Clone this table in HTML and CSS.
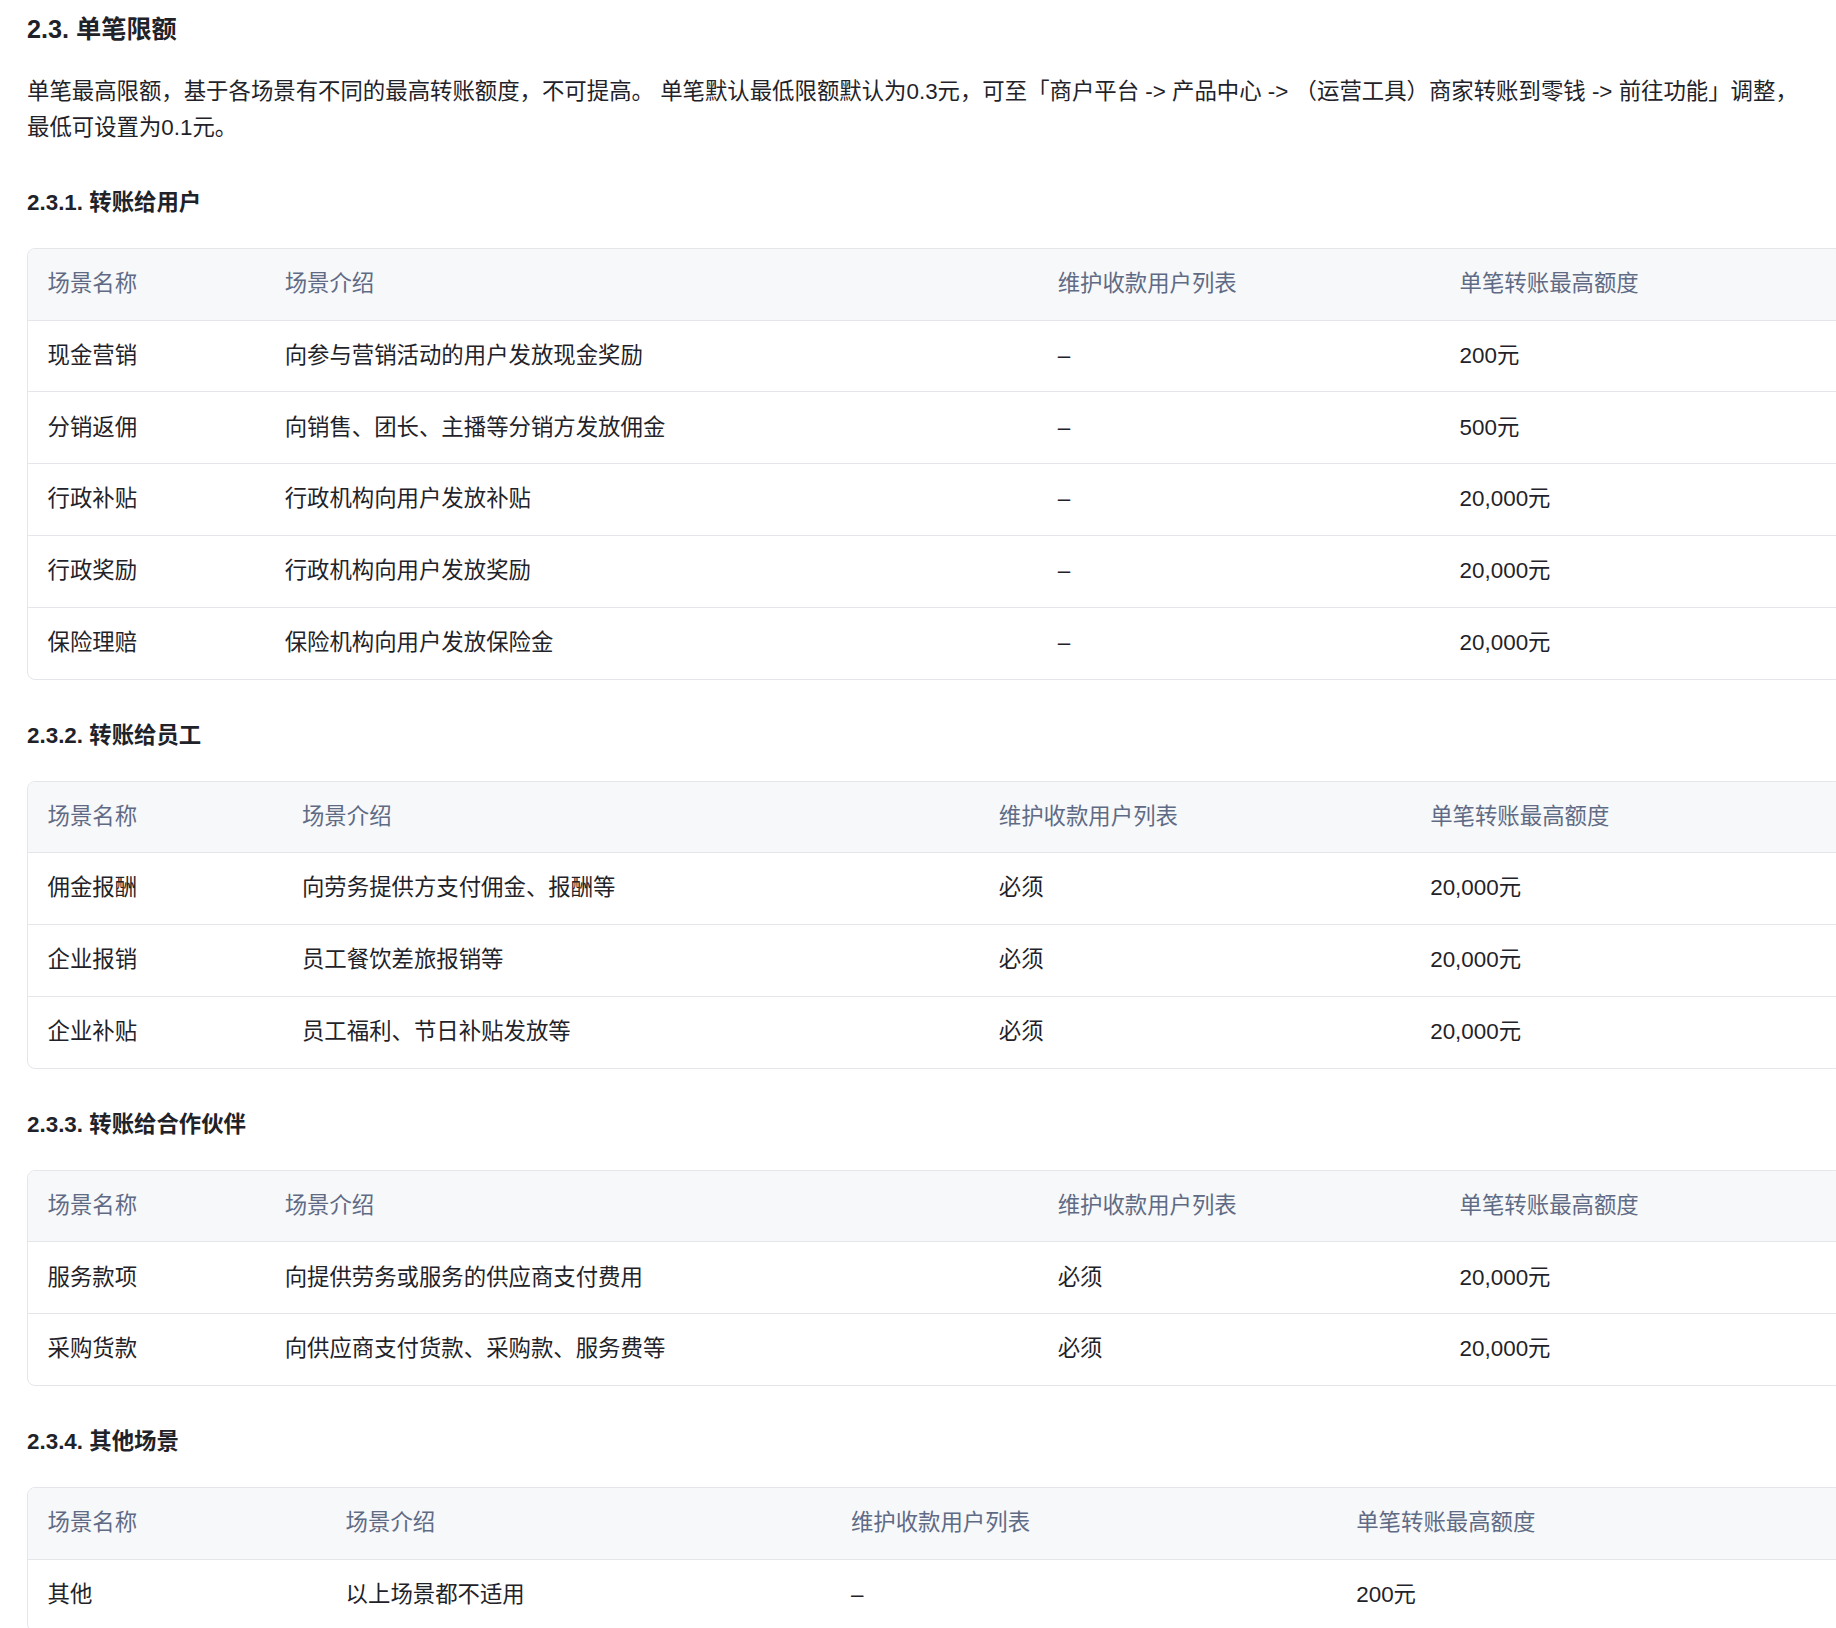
FILE: index.html
```html
<!DOCTYPE html>
<html lang="zh-CN">
<head>
<meta charset="utf-8">
<title>2.3. 单笔限额</title>
<link rel="stylesheet" href="styles.css">
</head>
<body>
<div class="page">
  <h3 class="title">2.3. 单笔限额</h3>
  <p class="desc">单笔最高限额，基于各场景有不同的最高转账额度，不可提高。 单笔默认最低限额默认为0.3元，可至「商户平台 -&gt; 产品中心 -&gt; （运营工具）商家转账到零钱 -&gt; 前往功能」调整，最低可设置为0.1元。</p>

  <h4 class="sub">2.3.1. 转账给用户</h4>
  <table class="grid">
    <thead>
      <tr><th>场景名称</th><th>场景介绍</th><th>维护收款用户列表</th><th>单笔转账最高额度</th></tr>
    </thead>
    <tbody>
      <tr><td>现金营销</td><td>向参与营销活动的用户发放现金奖励</td><td>–</td><td>200元</td></tr>
      <tr><td>分销返佣</td><td>向销售、团长、主播等分销方发放佣金</td><td>–</td><td>500元</td></tr>
      <tr><td>行政补贴</td><td>行政机构向用户发放补贴</td><td>–</td><td>20,000元</td></tr>
      <tr><td>行政奖励</td><td>行政机构向用户发放奖励</td><td>–</td><td>20,000元</td></tr>
      <tr><td>保险理赔</td><td>保险机构向用户发放保险金</td><td>–</td><td>20,000元</td></tr>
    </tbody>
  </table>

  <h4 class="sub">2.3.2. 转账给员工</h4>
  <table class="grid">
    <thead>
      <tr><th>场景名称</th><th>场景介绍</th><th>维护收款用户列表</th><th>单笔转账最高额度</th></tr>
    </thead>
    <tbody>
      <tr><td>佣金报酬</td><td>向劳务提供方支付佣金、报酬等</td><td>必须</td><td>20,000元</td></tr>
      <tr><td>企业报销</td><td>员工餐饮差旅报销等</td><td>必须</td><td>20,000元</td></tr>
      <tr><td>企业补贴</td><td>员工福利、节日补贴发放等</td><td>必须</td><td>20,000元</td></tr>
    </tbody>
  </table>

  <h4 class="sub">2.3.3. 转账给合作伙伴</h4>
  <table class="grid">
    <thead>
      <tr><th>场景名称</th><th>场景介绍</th><th>维护收款用户列表</th><th>单笔转账最高额度</th></tr>
    </thead>
    <tbody>
      <tr><td>服务款项</td><td>向提供劳务或服务的供应商支付费用</td><td>必须</td><td>20,000元</td></tr>
      <tr><td>采购货款</td><td>向供应商支付货款、采购款、服务费等</td><td>必须</td><td>20,000元</td></tr>
    </tbody>
  </table>

  <h4 class="sub">2.3.4. 其他场景</h4>
  <table class="grid">
    <thead>
      <tr><th>场景名称</th><th>场景介绍</th><th>维护收款用户列表</th><th>单笔转账最高额度</th></tr>
    </thead>
    <tbody>
      <tr><td>其他</td><td>以上场景都不适用</td><td>–</td><td>200元</td></tr>
    </tbody>
  </table>
</div>
</body>
</html>
```
FILE: styles.css
```css
html, body {
  margin: 0;
  padding: 0;
  background: #ffffff;
  overflow: hidden;
}

body {
  font-family: "Liberation Sans", "Noto Sans CJK SC", sans-serif;
  color: #1f2329;
  font-size: 22.4px;
  line-height: 36.4px;
}

.page {
  width: 1816px;
  padding: 11px 0 40px 27px;
}

.title {
  margin: 0 0 27px;
  font-size: 25.2px;
  line-height: 36px;
  font-weight: 600;
  color: #1f2329;
}

.desc {
  margin: 0;
  max-width: 1790px;
}

.sub {
  margin: 38px 0 27px;
  font-size: 22.4px;
  line-height: 36px;
  font-weight: 600;
  color: #1f2329;
}

.grid {
  width: 100%;
  border-collapse: separate;
  border-spacing: 0;
  border: 1px solid #e4e6ea;
  border-radius: 8px;
  overflow: hidden;
}

.grid th,
.grid td {
  text-align: left;
  padding: 17.2px 19.6px;
  line-height: 36.4px;
  border-bottom: 1px solid #e4e6ea;
  white-space: nowrap;
}

.grid th {
  background: #f7f8fa;
  color: #5f6b85;
  font-weight: 400;
}

.grid td {
  color: #1f2329;
}

.grid tbody tr:last-child td {
  border-bottom: none;
}
```
